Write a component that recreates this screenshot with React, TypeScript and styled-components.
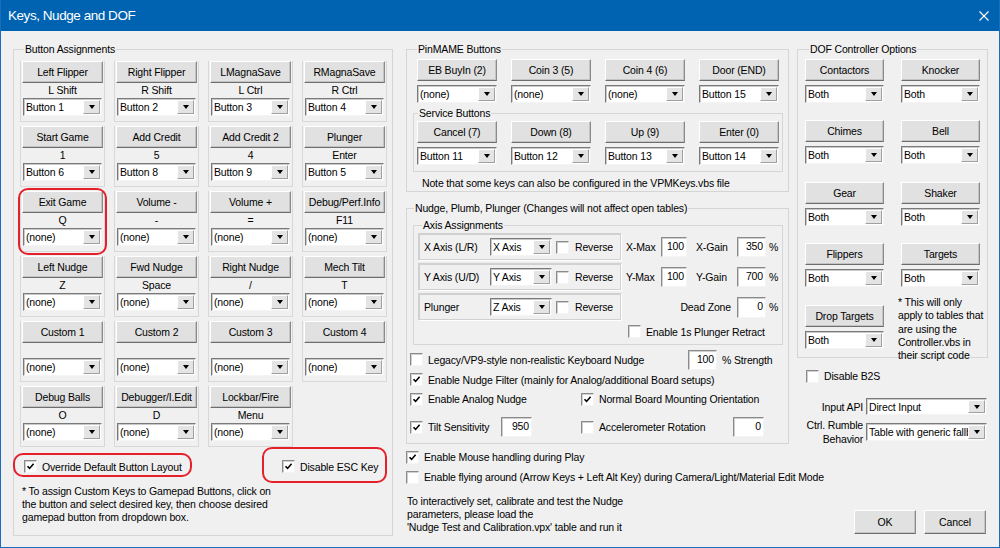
import React from 'react';
import styled, { createGlobalStyle } from 'styled-components';

const GlobalStyle = createGlobalStyle`
  html, body { margin: 0; padding: 0; background: #ffffff; }
  body {
    font-family: "Liberation Sans", Arial, sans-serif;
    font-size: 10.5px;
    letter-spacing: -0.15px;
    color: #000;
  }
  * { box-sizing: border-box; }
`;

type KeyCellData = { label: string; key?: string; pad: string; marked?: boolean };

const keyCells: KeyCellData[] = [
  { label: 'Left Flipper', key: 'L Shift', pad: 'Button 1' },
  { label: 'Right Flipper', key: 'R Shift', pad: 'Button 2' },
  { label: 'LMagnaSave', key: 'L Ctrl', pad: 'Button 3' },
  { label: 'RMagnaSave', key: 'R Ctrl', pad: 'Button 4' },
  { label: 'Start Game', key: '1', pad: 'Button 6' },
  { label: 'Add Credit', key: '5', pad: 'Button 8' },
  { label: 'Add Credit 2', key: '4', pad: 'Button 9' },
  { label: 'Plunger', key: 'Enter', pad: 'Button 5' },
  { label: 'Exit Game', key: 'Q', pad: '(none)', marked: true },
  { label: 'Volume -', key: '-', pad: '(none)' },
  { label: 'Volume +', key: '=', pad: '(none)' },
  { label: 'Debug/Perf.Info', key: 'F11', pad: '(none)' },
  { label: 'Left Nudge', key: 'Z', pad: '(none)' },
  { label: 'Fwd Nudge', key: 'Space', pad: '(none)' },
  { label: 'Right Nudge', key: '/', pad: '(none)' },
  { label: 'Mech Tilt', key: 'T', pad: '(none)' },
  { label: 'Custom 1', pad: '(none)' },
  { label: 'Custom 2', pad: '(none)' },
  { label: 'Custom 3', pad: '(none)' },
  { label: 'Custom 4', pad: '(none)' },
  { label: 'Debug Balls', key: 'O', pad: '(none)' },
  { label: 'Debugger/I.Edit', key: 'D', pad: '(none)' },
  { label: 'Lockbar/Fire', key: 'Menu', pad: '(none)' },
];

const pinmameButtons = [
  ['EB BuyIn (2)', '(none)'],
  ['Coin 3 (5)', '(none)'],
  ['Coin 4 (6)', '(none)'],
  ['Door (END)', 'Button 15'],
];

const serviceButtons = [
  ['Cancel (7)', 'Button 11'],
  ['Down (8)', 'Button 12'],
  ['Up (9)', 'Button 13'],
  ['Enter (0)', 'Button 14'],
];

const dofLeft = ['Contactors', 'Chimes', 'Gear', 'Flippers', 'Drop Targets'];
const dofRight = ['Knocker', 'Bell', 'Shaker', 'Targets'];

const Combo = ({ value, width, height }: { value: string; width?: string; height?: number }) => (
  <ComboBox $w={width} $h={height}>
    <ComboValue>{value}</ComboValue>
    <ComboArrow />
  </ComboBox>
);

const Check = ({ checked }: { checked?: boolean }) => (
  <CheckBox>
    {checked && (
      <svg width="9" height="9" viewBox="0 0 9 9">
        <path d="M1.5 4.2 L3.6 6.4 L7.6 1.8" fill="none" stroke="#000" strokeWidth="1.6" />
      </svg>
    )}
  </CheckBox>
);

const App = () => {
  return (
    <>
      <GlobalStyle />
      <Window>
        <TitleBar>
          <span>Keys, Nudge and DOF</span>
          <svg width="10" height="10" viewBox="0 0 10 10">
            <path d="M0.5 0.5 L9.5 9.5 M9.5 0.5 L0.5 9.5" stroke="#fff" strokeWidth="1.1" />
          </svg>
        </TitleBar>

        <Body>
          <LeftColumn>
            <AssignGroup>
              <Legend>Button Assignments</Legend>
              <KeyGrid>
                {keyCells.map((cell) => (
                  <KeyCell key={cell.label}>
                    <PushButton>{cell.label}</PushButton>
                    <KeyName>{cell.key ?? ''}</KeyName>
                    <Combo value={cell.pad} width="calc(100% - 2px)" />
                    {cell.marked && <RedRing $inset="-3px -3px -4px -3px" />}
                  </KeyCell>
                ))}
              </KeyGrid>

              <LayoutOptions>
                <CheckItem $w={258}>
                  <Check checked />
                  <span>Override Default Button Layout</span>
                  <RedRing $inset="-7px auto -4px -11px" $width={179} />
                </CheckItem>
                <CheckItem>
                  <Check checked />
                  <span>Disable ESC Key</span>
                  <RedRing $inset="-13px -9px -10px -20px" />
                </CheckItem>
              </LayoutOptions>

              <AssignNote>
                * To assign Custom Keys to Gamepad Buttons, click on
                <br />
                the button and select desired key, then choose desired
                <br />
                gamepad button from dropdown box.
              </AssignNote>
            </AssignGroup>
          </LeftColumn>

          <MiddleColumn>
            <PinGroup>
              <Legend>PinMAME Buttons</Legend>
              <ButtonRow $indent={4}>
                {pinmameButtons.map(([label, pad]) => (
                  <ButtonSlot key={label}>
                    <PushButton>{label}</PushButton>
                    <Combo value={pad} />
                  </ButtonSlot>
                ))}
              </ButtonRow>
              <ServiceGroup>
                <Legend>Service Buttons</Legend>
                <ButtonRow $indent={3}>
                  {serviceButtons.map(([label, pad]) => (
                    <ButtonSlot key={label}>
                      <PushButton>{label}</PushButton>
                      <Combo value={pad} />
                    </ButtonSlot>
                  ))}
                </ButtonRow>
              </ServiceGroup>
              <PinNote>Note that some keys can also be configured in the VPMKeys.vbs file</PinNote>
            </PinGroup>

            <NudgeGroup>
              <Legend>Nudge, Plumb, Plunger (Changes will not affect open tables)</Legend>
              <AxisGroup>
                <Legend>Axis Assignments</Legend>
                <AxisLines>
                  <AxisLine>
                    <AxisBox>
                      <AxisName>X Axis (L/R)</AxisName>
                      <Combo value="X Axis" width="62px" />
                      <ReverseItem>
                        <Check />
                        <span>Reverse</span>
                      </ReverseItem>
                    </AxisBox>
                    <FieldLabel $w={35} $ml={4}>X-Max</FieldLabel>
                    <NumField $w={26}>100</NumField>
                    <FieldLabel $w={41} $ml={9}>X-Gain</FieldLabel>
                    <NumField $w={29}>350</NumField>
                    <Unit>%</Unit>
                  </AxisLine>
                  <AxisLine>
                    <AxisBox>
                      <AxisName>Y Axis (U/D)</AxisName>
                      <Combo value="Y Axis" width="62px" />
                      <ReverseItem>
                        <Check />
                        <span>Reverse</span>
                      </ReverseItem>
                    </AxisBox>
                    <FieldLabel $w={35} $ml={4}>Y-Max</FieldLabel>
                    <NumField $w={26}>100</NumField>
                    <FieldLabel $w={41} $ml={9}>Y-Gain</FieldLabel>
                    <NumField $w={29}>700</NumField>
                    <Unit>%</Unit>
                  </AxisLine>
                  <AxisLine>
                    <AxisBox>
                      <AxisName>Plunger</AxisName>
                      <Combo value="Z Axis" width="62px" />
                      <ReverseItem>
                        <Check />
                        <span>Reverse</span>
                      </ReverseItem>
                    </AxisBox>
                    <FieldLabel $w={115} $right>Dead Zone</FieldLabel>
                    <NumField $w={29} $h={21}>0</NumField>
                    <Unit>%</Unit>
                  </AxisLine>
                </AxisLines>
                <RetractRow>
                  <CheckItem>
                    <Check />
                    <span>Enable 1s Plunger Retract</span>
                  </CheckItem>
                </RetractRow>
              </AxisGroup>

              <NudgeRow $h={21} $mt={4}>
                <CheckItem $w={278}>
                  <Check />
                  <span>Legacy/VP9-style non-realistic Keyboard Nudge</span>
                </CheckItem>
                <NumField $w={29}>100</NumField>
                <Unit $ml={5}>% Strength</Unit>
              </NudgeRow>
              <NudgeRow $h={19}>
                <CheckItem>
                  <Check checked />
                  <span>Enable Nudge Filter (mainly for Analog/additional Board setups)</span>
                </CheckItem>
              </NudgeRow>
              <NudgeRow $h={20}>
                <CheckItem $w={171}>
                  <Check checked />
                  <span>Enable Analog Nudge</span>
                </CheckItem>
                <CheckItem>
                  <Check checked />
                  <span>Normal Board Mounting Orientation</span>
                </CheckItem>
              </NudgeRow>
              <NudgeRow $h={22} $mt={7}>
                <CheckItem>
                  <Check checked />
                  <FieldLabel $w={73}>Tilt Sensitivity</FieldLabel>
                </CheckItem>
                <NumField $w={31}>950</NumField>
                <CheckItem $ml={49}>
                  <Check />
                  <FieldLabel $w={134}>Accelerometer Rotation</FieldLabel>
                </CheckItem>
                <NumField $w={31}>0</NumField>
              </NudgeRow>
            </NudgeGroup>

            <PlainRow $mt={4}>
              <CheckItem>
                <Check checked />
                <span>Enable Mouse handling during Play</span>
              </CheckItem>
            </PlainRow>
            <PlainRow $mt={2}>
              <CheckItem>
                <Check />
                <span>Enable flying around (Arrow Keys + Left Alt Key) during Camera/Light/Material Edit Mode</span>
              </CheckItem>
            </PlainRow>
            <CalibrationNote>
              To interactively set, calibrate and test the Nudge
              <br />
              parameters, please load the
              <br />
              'Nudge Test and Calibration.vpx' table and run it
            </CalibrationNote>
          </MiddleColumn>

          <RightColumn>
            <DofGroup>
              <Legend>DOF Controller Options</Legend>
              <DofColumns>
                <DofColumn>
                  {dofLeft.map((name) => (
                    <ButtonSlot key={name}>
                      <PushButton>{name}</PushButton>
                      <Combo value="Both" />
                    </ButtonSlot>
                  ))}
                </DofColumn>
                <DofColumn>
                  {dofRight.map((name) => (
                    <ButtonSlot key={name}>
                      <PushButton>{name}</PushButton>
                      <Combo value="Both" />
                    </ButtonSlot>
                  ))}
                  <DofNote>
                    * This will only
                    <br />
                    apply to tables that
                    <br />
                    are using the
                    <br />
                    Controller.vbs in
                    <br />
                    their script code
                  </DofNote>
                </DofColumn>
              </DofColumns>
            </DofGroup>

            <B2SRow>
              <CheckItem>
                <Check />
                <span>Disable B2S</span>
              </CheckItem>
            </B2SRow>

            <SettingRow $mt={14} $h={17}>
              <SettingLabel>Input API</SettingLabel>
              <Combo value="Direct Input" width="121px" height={17} />
            </SettingRow>
            <SettingRow $mt={3} $h={28}>
              <SettingLabel>
                Ctrl. Rumble
                <br />
                Behavior
              </SettingLabel>
              <Combo value="Table with generic fallback" width="121px" />
            </SettingRow>

            <DialogButtons>
              <DialogButton>OK</DialogButton>
              <DialogButton>Cancel</DialogButton>
            </DialogButtons>
          </RightColumn>
        </Body>
      </Window>
    </>
  );
};

const Window = styled.div`
  width: 1000px;
  height: 548px;
  display: flex;
  flex-direction: column;
  background: #f0f0f0;
  border: 1px solid #1a6cbd;
  border-top: none;
`;

const TitleBar = styled.div`
  flex: none;
  height: 31px;
  display: flex;
  align-items: center;
  justify-content: space-between;
  padding: 0 10px 0 7px;
  background: #0063b1;
  color: #ffffff;
  font-size: 13.5px;
  letter-spacing: -0.45px;
`;

const Body = styled.div`
  flex: 1;
  display: flex;
  padding: 12px 11px 0 12px;
`;

const LeftColumn = styled.div`
  width: 380px;
  flex: none;
`;

const MiddleColumn = styled.div`
  width: 383px;
  flex: none;
  margin-left: 13px;
  display: flex;
  flex-direction: column;
`;

const RightColumn = styled.div`
  width: 191px;
  flex: none;
  margin-left: 8px;
  display: flex;
  flex-direction: column;
  padding-bottom: 13px;
`;

const Group = styled.fieldset`
  margin: 0;
  min-width: 0;
  padding: 0;
  border: 1px solid #d5d5d5;
`;

const Legend = styled.legend`
  margin-left: 4px;
  padding: 0 1px;
  line-height: 13px;
`;

const AssignGroup = styled(Group)`
  height: 493px;
  padding: 5px 4px 0 6px;
`;

const KeyGrid = styled.div`
  display: grid;
  grid-template-columns: repeat(4, 85px);
  column-gap: 9px;
  row-gap: 4px;
`;

const KeyCell = styled.div`
  position: relative;
  height: 61px;
  display: flex;
  flex-direction: column;
  align-items: center;
  padding: 0 1px 5px;
  border: 1px solid #d8d8d8;
  border-top: none;
`;

const PushButton = styled.button`
  width: 100%;
  height: 22px;
  flex: none;
  margin: 0;
  padding: 0;
  font: inherit;
  letter-spacing: inherit;
  color: #000;
  white-space: nowrap;
  background: #e1e1e1;
  border: 1px solid;
  border-color: #ffffff #8a8a8a #6e6e6e #ffffff;
  box-shadow: inset -1px -1px 0 #c4c4c4;
`;

const KeyName = styled.div`
  height: 15px;
  line-height: 15px;
  text-align: center;
`;

const ComboBox = styled.div<{ $w?: string; $h?: number }>`
  flex: none;
  display: flex;
  width: ${(p) => p.$w ?? '100%'};
  height: ${(p) => p.$h ?? 18}px;
  background: #ffffff;
  border: 1px solid;
  border-color: #7a7a7a #f4f4f4 #f4f4f4 #7a7a7a;
  box-shadow: inset 1px 1px 0 #c9c9c9;
`;

const ComboValue = styled.span`
  flex: 1;
  min-width: 0;
  overflow: hidden;
  white-space: nowrap;
  padding-left: 2px;
  display: flex;
  align-items: center;
`;

const ComboArrow = styled.span`
  flex: none;
  width: 17px;
  margin: 1px 1px 1px 0;
  display: flex;
  align-items: center;
  justify-content: center;
  background: #e4e4e4;
  border: 1px solid;
  border-color: #ffffff #a0a0a0 #a0a0a0 #ffffff;

  &::after {
    content: '';
    border-left: 3.5px solid transparent;
    border-right: 3.5px solid transparent;
    border-top: 4px solid #000;
  }
`;

const CheckBox = styled.span`
  flex: none;
  width: 13px;
  height: 13px;
  display: flex;
  align-items: center;
  justify-content: center;
  background: #ffffff;
  border: 1px solid;
  border-color: #8a8a8a #f4f4f4 #f4f4f4 #8a8a8a;
  box-shadow: inset 1px 1px 0 #cfcfcf;
`;

const CheckItem = styled.div<{ $w?: number; $ml?: number }>`
  position: relative;
  flex: none;
  display: inline-flex;
  align-items: center;
  gap: 5px;
  width: ${(p) => (p.$w ? `${p.$w}px` : 'auto')};
  margin-left: ${(p) => p.$ml ?? 0}px;
  white-space: nowrap;
`;

const RedRing = styled.span<{ $inset: string; $width?: number }>`
  position: absolute;
  inset: ${(p) => p.$inset};
  width: ${(p) => (p.$width ? `${p.$width}px` : 'auto')};
  border: 2px solid #e5202b;
  border-radius: 10px;
  pointer-events: none;
`;

const LayoutOptions = styled.div`
  display: flex;
  align-items: center;
  height: 21px;
  margin-top: 9px;
  padding-left: 4px;
`;

const AssignNote = styled.div`
  margin-top: 7.5px;
  padding-left: 2px;
  line-height: 13px;
`;

const PinGroup = styled(Group)`
  height: 149px;
  padding: 3px 5px 0 6px;
`;

const ButtonRow = styled.div<{ $indent: number }>`
  display: grid;
  grid-template-columns: repeat(4, 80px);
  column-gap: 14px;
  padding-left: ${(p) => p.$indent}px;
`;

const ButtonSlot = styled.div`
  display: flex;
  flex-direction: column;
  gap: 4px;
`;

const ServiceGroup = styled(Group)`
  margin-top: 4px;
  padding: 1px 0 6px 0;
`;

const PinNote = styled.div`
  margin-top: 4.5px;
  padding-left: 9px;
  line-height: 13px;
`;

const NudgeGroup = styled(Group)`
  margin-top: 10px;
  height: 242px;
  padding: 0 3px;
`;

const AxisGroup = styled(Group)`
  margin: 4px 2px 0 3px;
  padding: 1px 0 5px 4px;
`;

const AxisLines = styled.div`
  display: flex;
  flex-direction: column;
  gap: 2px;
`;

const AxisLine = styled.div`
  display: flex;
  align-items: center;
  height: 28px;
`;

const AxisBox = styled.div`
  flex: none;
  width: 204px;
  height: 28px;
  display: flex;
  align-items: center;
  padding-left: 5px;
  border: 1px solid;
  border-color: #d0d0d0 #ffffff #ffffff #d0d0d0;
  box-shadow: 1px 1px 0 #d0d0d0 inset, -1px -1px 0 #d0d0d0 inset;
`;

const AxisName = styled.span`
  width: 66px;
  flex: none;
`;

const ReverseItem = styled.div`
  display: flex;
  align-items: center;
  gap: 6px;
  margin-left: 4px;
`;

const FieldLabel = styled.span<{ $w: number; $ml?: number; $right?: boolean }>`
  flex: none;
  width: ${(p) => p.$w}px;
  margin-left: ${(p) => p.$ml ?? 0}px;
  text-align: ${(p) => (p.$right ? 'right' : 'left')};
  padding-right: ${(p) => (p.$right ? 6 : 0)}px;
  white-space: nowrap;
`;

const NumField = styled.div<{ $w: number; $h?: number }>`
  flex: none;
  width: ${(p) => p.$w}px;
  height: ${(p) => p.$h ?? 20}px;
  padding: 1px 2px 0 0;
  text-align: right;
  line-height: 15px;
  background: #ffffff;
  border: 1px solid;
  border-color: #8a8a8a #f4f4f4 #f4f4f4 #8a8a8a;
  box-shadow: inset 1px 1px 0 #cfcfcf;
`;

const Unit = styled.span<{ $ml?: number }>`
  margin-left: ${(p) => p.$ml ?? 3}px;
  white-space: nowrap;
`;

const RetractRow = styled.div`
  height: 15px;
  margin-top: 3px;
  padding-left: 210px;
  display: flex;
  align-items: center;
`;

const NudgeRow = styled.div<{ $h: number; $mt?: number }>`
  display: flex;
  align-items: center;
  height: ${(p) => p.$h}px;
  margin-top: ${(p) => p.$mt ?? 0}px;
`;

const PlainRow = styled.div<{ $mt: number }>`
  display: flex;
  align-items: center;
  height: 18px;
  margin-top: ${(p) => p.$mt}px;
`;

const CalibrationNote = styled.div`
  margin-top: 8.5px;
  padding-left: 1px;
  line-height: 13px;
`;

const DofGroup = styled(Group)`
  height: 315px;
  padding: 2.5px 6px 0 7px;
`;

const DofColumns = styled.div`
  display: flex;
  gap: 17px;
`;

const DofColumn = styled.div`
  width: 79px;
  display: flex;
  flex-direction: column;
  gap: 17.5px;
`;

const DofNote = styled.div`
  margin: -8.5px 0 0 -3px;
  line-height: 13.3px;
  white-space: nowrap;
`;

const B2SRow = styled.div`
  height: 16px;
  margin-top: 10px;
  padding-left: 9px;
  display: flex;
  align-items: center;
`;

const SettingRow = styled.div<{ $mt: number; $h: number }>`
  display: flex;
  align-items: center;
  gap: 3px;
  height: ${(p) => p.$h}px;
  margin-top: ${(p) => p.$mt}px;
`;

const SettingLabel = styled.span`
  width: 66px;
  flex: none;
  text-align: right;
  line-height: 14px;
  white-space: nowrap;
`;

const DialogButtons = styled.div`
  margin-top: auto;
  display: flex;
  justify-content: flex-end;
  gap: 8px;
  padding-right: 2px;
`;

const DialogButton = styled(PushButton)`
  width: 62px;
  height: 24px;
`;

export default App;
